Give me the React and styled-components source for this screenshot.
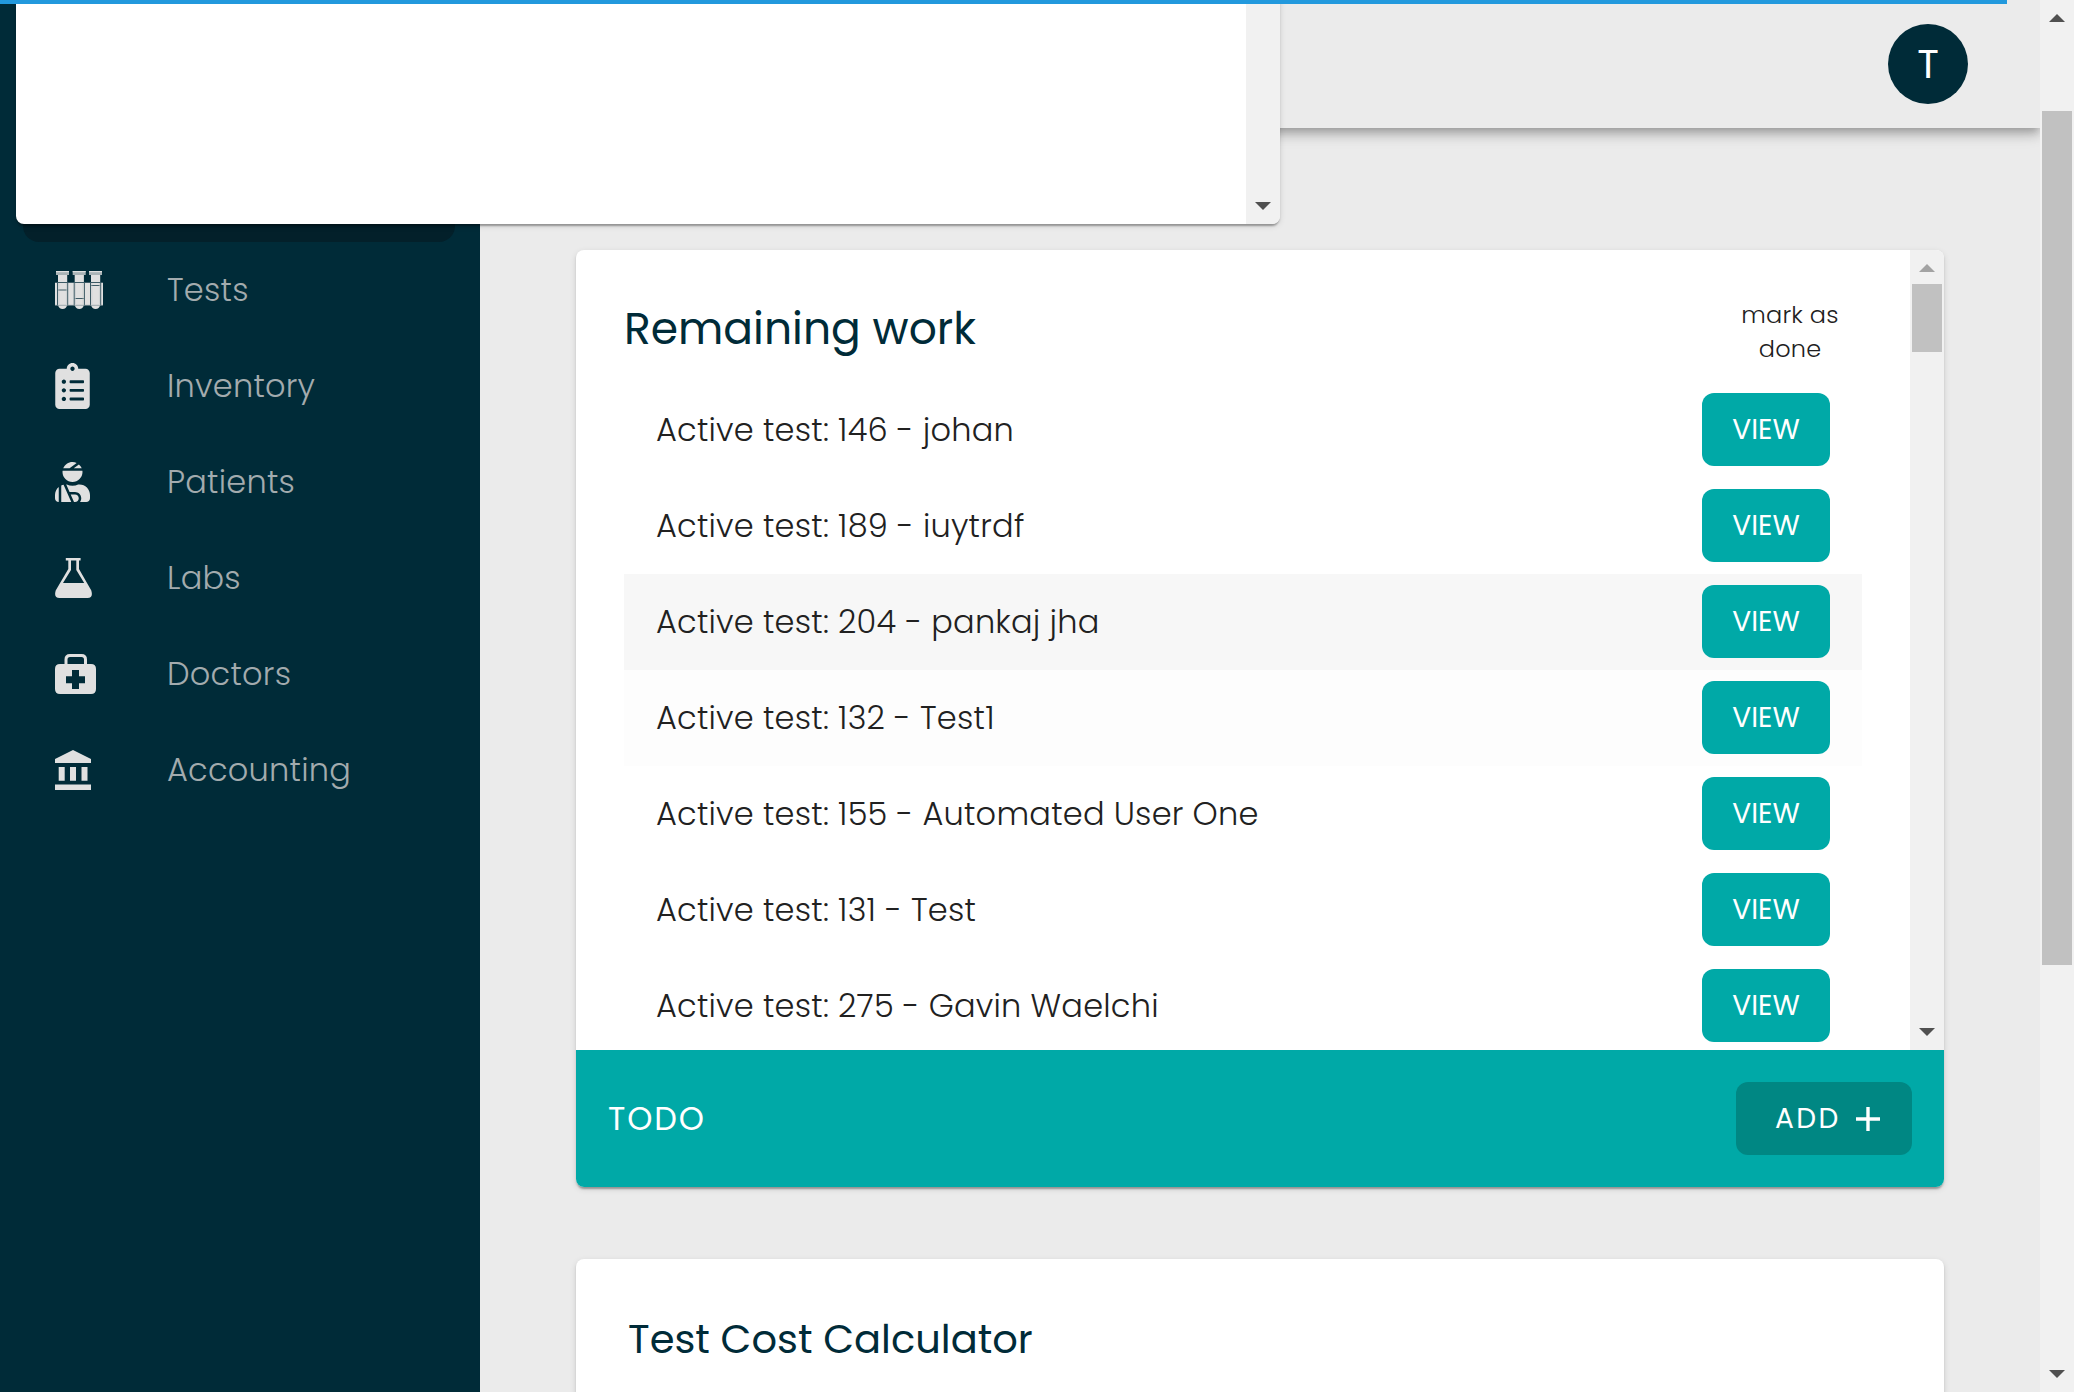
import React from 'react';
import styled, { createGlobalStyle } from 'styled-components';
import { FaClipboardList, FaUserInjured } from 'react-icons/fa';

const GlobalStyle = createGlobalStyle`
  * { box-sizing: border-box; }
  body {
    margin: 0;
    overflow: hidden;
    background: #ebebeb;
    font-family: Poppins, Inter, "Open Sans", sans-serif;
    color: #212121;
  }
`;

const cardShadow =
  '0 4px 2px -2px rgba(0,0,0,.2), 0 2px 2px rgba(0,0,0,.14), 0 2px 6px rgba(0,0,0,.12)';

const Page = styled.div`
  position: relative;
  display: flex;
  height: 100vh;
  overflow: hidden;
`;

const LoadingBar = styled.div`
  position: absolute;
  z-index: 20;
  top: 0;
  left: 0;
  width: 2007px;
  height: 4px;
  background: #2299dd;
`;

const FloatingPanel = styled.div`
  position: absolute;
  z-index: 10;
  top: -16px;
  left: 16px;
  width: 1264px;
  height: 240px;
  display: flex;
  justify-content: flex-end;
  border-radius: 8px;
  background: #fff;
  box-shadow: ${cardShadow};
  overflow: hidden;
`;

const Sidebar = styled.nav`
  flex: none;
  width: 480px;
  padding: 146px 25px 0 23px;
  background: #002b38;
`;

const NavItem = styled.div`
  display: flex;
  align-items: center;
  height: 96px;
  padding-left: 32px;
  border-radius: 16px;
  background: ${(p) => (p.$active ? '#03202a' : 'transparent')};
`;

const NavIcon = styled.span`
  display: flex;
  flex: none;
  width: 112px;
  color: #e0e0e0;

  svg {
    display: block;
    width: ${(p) => p.$w}px;
    height: ${(p) => p.$h}px;
  }
`;

const NavLabel = styled.span`
  font-size: 32px;
  font-weight: 300;
  line-height: 48px;
  letter-spacing: 0.23px;
  color: #a3abae;
  white-space: nowrap;
`;

const Main = styled.main`
  flex: 1;
  min-width: 0;
  display: flex;
  flex-direction: column;
  overflow: hidden;
`;

const Header = styled.header`
  flex: none;
  display: flex;
  align-items: center;
  justify-content: flex-end;
  height: 128px;
  padding-right: 72px;
  background: #ebebeb;
  box-shadow: 0 4px 8px -2px rgba(0,0,0,.2), 0 8px 10px rgba(0,0,0,.14),
    0 2px 20px rgba(0,0,0,.12);
`;

const Avatar = styled.div`
  display: flex;
  align-items: center;
  justify-content: center;
  width: 80px;
  height: 80px;
  border-radius: 50%;
  background: #002b38;
  color: #fff;
  font-size: 40px;
  line-height: 40px;
`;

const Content = styled.div`
  display: flex;
  flex-direction: column;
  gap: 72px;
  padding: 122px 96px 0;
`;

const Card = styled.section`
  flex: none;
  border-radius: 8px;
  background: #fff;
  box-shadow: ${cardShadow};
  overflow: hidden;
`;

const ScrollArea = styled.div`
  display: flex;
  height: 800px;
  overflow: hidden;
`;

const ScrollBody = styled.div`
  flex: 1;
  padding: 0 48px;
`;

const ListHeader = styled.div`
  display: flex;
  align-items: center;
  justify-content: space-between;
  height: 132px;
  padding-top: 32px;
`;

const ListTitle = styled.h2`
  margin: 0;
  padding-bottom: 6px;
  font-size: 44px;
  font-weight: 400;
  line-height: 64px;
  color: #002b38;
`;

const ListHint = styled.div`
  width: 144px;
  font-size: 24px;
  font-weight: 300;
  line-height: 34px;
  letter-spacing: 0.2px;
  text-align: center;
`;

const TaskRow = styled.div`
  display: flex;
  align-items: center;
  justify-content: space-between;
  height: 96px;
  padding: 0 32px;
  background: ${(p) => p.$bg || '#fff'};
`;

const TaskLabel = styled.span`
  font-size: 32px;
  font-weight: 300;
  line-height: 48px;
  letter-spacing: 0.23px;
`;

const ViewButton = styled.button`
  width: 128px;
  height: 73px;
  margin-bottom: 1px;
  padding: 1px 0 0;
  border: 0;
  border-radius: 12px;
  background: #00a9a7;
  color: #fff;
  font: 400 28px/48px Poppins, Inter, sans-serif;
`;

const CardFooter = styled.footer`
  display: flex;
  align-items: center;
  justify-content: space-between;
  height: 137px;
  padding: 0 32px;
  background: #00a9a7;
  color: #fff;
`;

const FooterTitle = styled.span`
  font-size: 32px;
  font-weight: 400;
  letter-spacing: 1.9px;
`;

const AddButton = styled.button`
  display: flex;
  align-items: center;
  justify-content: space-between;
  width: 176px;
  height: 73px;
  padding: 0 32px 0 39px;
  border: 0;
  border-radius: 12px;
  background: #008783;
  color: #fff;
  font: 400 28px/48px Poppins, Inter, sans-serif;
  letter-spacing: 2.4px;
`;

const CalculatorCard = styled(Card)`
  height: 400px;
  padding: 50px 52px;
`;

const CalculatorTitle = styled.h3`
  margin: 0;
  font-size: 40px;
  font-weight: 400;
  line-height: 60px;
  color: #002b38;
`;

const Track = styled.div`
  flex: none;
  display: flex;
  flex-direction: column;
  align-items: center;
  justify-content: space-between;
  width: 34px;
  padding: 14px 0;
  background: #f1f1f1;
`;

const Arrow = styled.i`
  border: 8px solid transparent;
  border-${(p) => (p.$up ? 'bottom' : 'top')}-color: ${(p) => (p.$muted ? '#a3a3a3' : '#505050')};
  border-${(p) => (p.$up ? 'top' : 'bottom')}-width: 0;
`;

const ThumbSpace = styled.div`
  flex: 1;
  width: 30px;
  padding-top: ${(p) => p.$offset}px;
`;

const Thumb = styled.div`
  height: ${(p) => p.$size}px;
  background: #c1c1c1;
`;

function Scrollbar({ atStart, offset, size }) {
  return (
    <Track>
      {size && <Arrow $up $muted={atStart} />}
      <ThumbSpace $offset={offset}>{size && <Thumb $size={size} />}</ThumbSpace>
      <Arrow />
    </Track>
  );
}

const TestTubes = () => (
  <svg viewBox="0 0 48 38">
    <path d="M0 12h48v22H0z" fill="currentColor" />
    {[
      { x: 3, level: 19 },
      { x: 19.7, level: 27.5 },
      { x: 36, level: 14.5 },
    ].map(({ x, level }) => (
      <g key={x}>
        <path d={`M${x - 1} 11.5h11.2v22.5h-11.2z`} fill="#3c5a65" />
        <path d={`M${x} 4h9.2v30q-1 4-4.6 4t-4.6-4z`} fill="currentColor" />
        <path d={`M${x - 2} 0h13v4h-13z`} fill="#a9b3b6" />
        <path d={`M${x - 2} 0h13v1.2h-13z`} fill="currentColor" />
        <path d={`M${x} ${level}h9.2`} stroke="#3c5a65" />
        <path d={`M${x + 0.8} 12v21M${x + 8.4} 12v21`} stroke="#c2c8ca" strokeWidth=".6" />
      </g>
    ))}
    <path d="M0 11.5h48" stroke="#3c5a65" />
    <path d="M0 34.3h48" stroke="#8b9a9f" strokeWidth=".8" />
  </svg>
);

const Flask = () => (
  <svg viewBox="0 0 37 40" fill="currentColor" fillRule="evenodd">
    <path d="M10.8 0h14.8v2.4H24V11l12.3 21.5Q38.5 40 32.5 40h-28Q-1.5 40 .7 32.5L13.3 11V2.4h-2.5zM16 2.4V12L8 25h21.2L21.3 12V2.4z" />
  </svg>
);

const Medkit = () => (
  <svg viewBox="0 0 41 40">
    <path d="M11 12V5.5q0-4 4-4h11.5q4 0 4 4V12" fill="none" stroke="currentColor" strokeWidth="3" />
    <path
      d="M5 10h31q5 0 5 5v20q0 5-5 5H5q-5 0-5-5V15q0-5 5-5zm12 6v6.3h-6v7h6V35h7v-5.7h6v-7h-6V16z"
      fill="currentColor"
      fillRule="evenodd"
    />
  </svg>
);

const Bank = () => (
  <svg viewBox="0 0 36 40" fill="currentColor">
    <path d="M18 0l18 9v4H0V9zM3.7 17h6v13.8h-6zM15 17h6v13.8h-6zM26.5 17h6v13.8h-6zM0 34.4h36V40H0z" />
  </svg>
);

const navItems = [
  { label: 'Tests', Icon: TestTubes, w: 48, h: 38 },
  { label: 'Inventory', Icon: FaClipboardList, w: 35, h: 46 },
  { label: 'Patients', Icon: FaUserInjured, w: 35, h: 40 },
  { label: 'Labs', Icon: Flask, w: 37, h: 40 },
  { label: 'Doctors', Icon: Medkit, w: 41, h: 40 },
  { label: 'Accounting', Icon: Bank, w: 36, h: 40 },
];

const tasks = [
  { label: 'Active test: 146 - johan' },
  { label: 'Active test: 189 - iuytrdf' },
  { label: 'Active test: 204 - pankaj jha', bg: '#f7f7f7' },
  { label: 'Active test: 132 - Test1', bg: '#fdfdfd' },
  { label: 'Active test: 155 - Automated User One' },
  { label: 'Active test: 131 - Test' },
  { label: 'Active test: 275 - Gavin Waelchi' },
];

export default function App() {
  return (
    <Page>
      <GlobalStyle />
      <LoadingBar />
      <FloatingPanel>
        <Scrollbar />
      </FloatingPanel>

      <Sidebar>
        <NavItem $active />
        {navItems.map(({ label, Icon, w, h }) => (
          <NavItem key={label}>
            <NavIcon $w={w} $h={h}>
              <Icon />
            </NavIcon>
            <NavLabel>{label}</NavLabel>
          </NavItem>
        ))}
      </Sidebar>

      <Main>
        <Header>
          <Avatar>T</Avatar>
        </Header>
        <Content>
          <Card>
            <ScrollArea>
              <ScrollBody>
                <ListHeader>
                  <ListTitle>Remaining work</ListTitle>
                  <ListHint>
                    mark as
                    <br />
                    done
                  </ListHint>
                </ListHeader>
                {tasks.map(({ label, bg }) => (
                  <TaskRow key={label} $bg={bg}>
                    <TaskLabel>{label}</TaskLabel>
                    <ViewButton>VIEW</ViewButton>
                  </TaskRow>
                ))}
              </ScrollBody>
              <Scrollbar atStart offset={12} size={68} />
            </ScrollArea>
            <CardFooter>
              <FooterTitle>TODO</FooterTitle>
              <AddButton>
                ADD
                <svg width="24" height="24" viewBox="0 0 24 24">
                  <path d="M12 0v24M0 12h24" stroke="currentColor" strokeWidth="3.4" />
                </svg>
              </AddButton>
            </CardFooter>
          </Card>
          <CalculatorCard>
            <CalculatorTitle>Test Cost Calculator</CalculatorTitle>
          </CalculatorCard>
        </Content>
      </Main>

      <Scrollbar offset={89} size={854} />
    </Page>
  );
}
